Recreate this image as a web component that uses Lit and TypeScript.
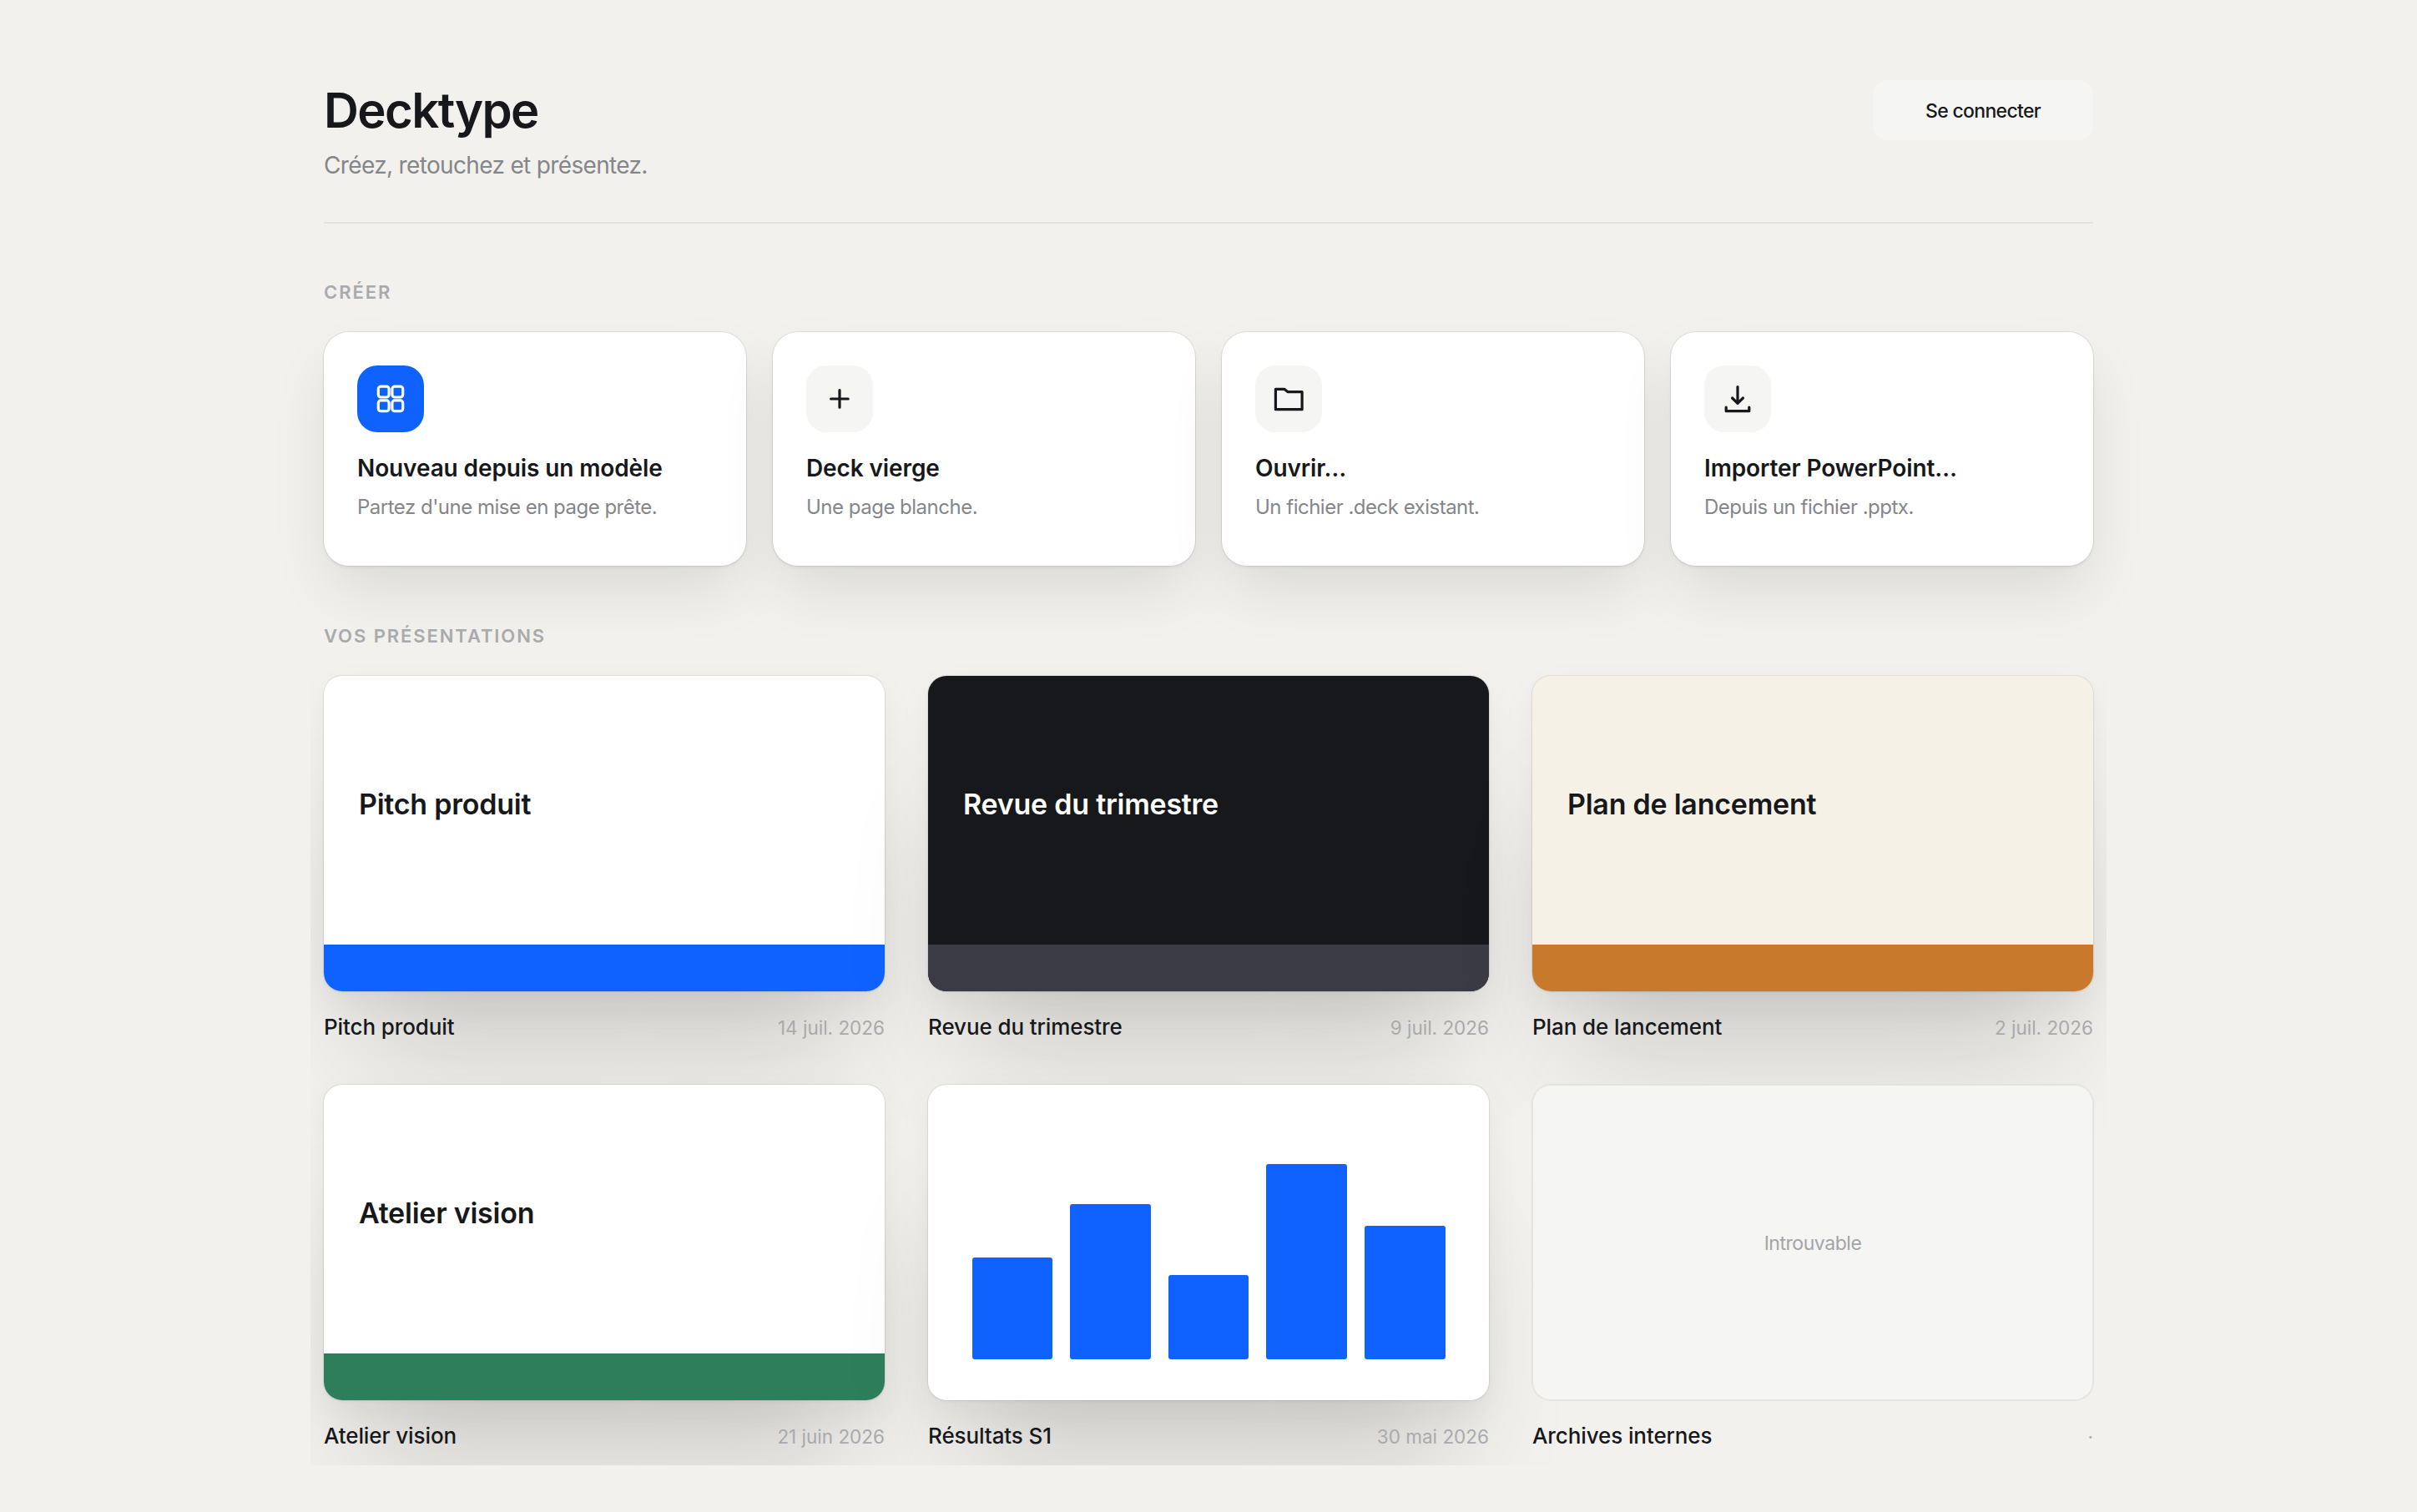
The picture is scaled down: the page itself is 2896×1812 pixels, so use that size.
import { LitElement, css, html, svg, nothing } from 'lit';
import { customElement } from 'lit/decorators.js';
import { classMap } from 'lit/directives/class-map.js';
import { styleMap } from 'lit/directives/style-map.js';

const icons = {
    grid: svg`
        <rect x="5.3" y="5.2" width="12.8" height="12.8" rx="3"/>
        <rect x="21.9" y="5.2" width="12.8" height="12.8" rx="3"/>
        <rect x="5.3" y="21.9" width="12.8" height="12.8" rx="3"/>
        <rect x="21.9" y="21.9" width="12.8" height="12.8" rx="3"/>`,
    plus: svg`<path d="M20 9.6v20.6M9.6 20h20.6"/>`,
    folder: svg`<path d="M4.4 8.3h10.4l4.3 3.4h17v21H4.4z"/>`,
    download: svg`<path d="M20 5.6v19.8M13.6 19l6.4 6.4 6.4-6.4M6.2 30v4.7h27.6V30"/>`,
}

interface Action {
    icon: keyof typeof icons;
    title: string;
    text: string;
    primary?: boolean;
}

interface Deck {
    title: string;
    date: string;
    theme: string;
    bars?: number[];
}

const actions: Action[] = [
    { icon: 'grid', title: 'Nouveau depuis un modèle', text: "Partez d'une mise en page prête.", primary: true },
    { icon: 'plus', title: 'Deck vierge', text: 'Une page blanche.' },
    { icon: 'folder', title: 'Ouvrir…', text: 'Un fichier .deck existant.' },
    { icon: 'download', title: 'Importer PowerPoint…', text: 'Depuis un fichier .pptx.' },
]

const decks: Deck[] = [
    { title: 'Pitch produit', date: '14 juil. 2026', theme: 'blue' },
    { title: 'Revue du trimestre', date: '9 juil. 2026', theme: 'dark' },
    { title: 'Plan de lancement', date: '2 juil. 2026', theme: 'sand' },
    { title: 'Atelier vision', date: '21 juin 2026', theme: 'green' },
    { title: 'Résultats S1', date: '30 mai 2026', theme: 'chart', bars: [122, 186, 101, 234, 160] },
    { title: 'Archives internes', date: '·', theme: 'missing' },
]

@customElement('action-card')
export class ActionCard extends LitElement {
    static override properties = {
        action: { attribute: false },
    }

    declare action: Action;

    static override styles = css`
        :host {
            display: block;
            box-sizing: border-box;
            height: 280px;
            padding: 40px;
            border-radius: 30px;
            background-color: #fff;
            box-shadow:
                0 0 0 1px rgba(0, 0, 0, 0.07),
                0 2px 4px rgba(0, 0, 0, 0.06),
                0 34px 72px -8px rgba(0, 0, 0, 0.1);
        }

        .icon {
            display: flex;
            align-items: center;
            justify-content: center;
            width: 80px;
            height: 80px;
            border-radius: 24px;
            background-color: #f5f5f3;
            color: #17181b;
        }

        .primary {
            background-color: #0f62fe;
            color: #fff;
        }

        svg {
            width: 40px;
            height: 40px;
            fill: none;
            stroke: currentColor;
            stroke-width: 3.2;
            stroke-linecap: round;
            stroke-linejoin: round;
        }

        .title {
            margin-top: 25px;
            font-size: 28px;
            line-height: 36px;
            font-weight: 600;
            letter-spacing: -0.004em;
            color: #17181b;
            white-space: nowrap;
        }

        .text {
            margin-top: 12px;
            font-size: 24px;
            line-height: 33px;
            letter-spacing: -0.021em;
            color: #85868a;
            white-space: nowrap;
        }
    `

    override render() {
        const { icon, title, text, primary } = this.action;
        return html`
        <div class=${classMap({ icon: true, primary: !!primary })}>
            <svg viewBox="0 0 40 40">${icons[icon]}</svg>
        </div>
        <div class="title">${title}</div>
        <div class="text">${text}</div>
        `
    }
}

@customElement('deck-tile')
export class DeckTile extends LitElement {
    static override properties = {
        deck: { attribute: false },
    }

    declare deck: Deck;

    static override styles = css`
        :host {
            display: block;
        }

        .thumb {
            display: flex;
            flex-direction: column;
            box-sizing: border-box;
            height: 378px;
            border-radius: 22px;
            overflow: hidden;
            background-color: #fff;
            color: #17181b;
            box-shadow:
                0 0 0 1px rgba(0, 0, 0, 0.06),
                0 1px 4px rgba(0, 0, 0, 0.05),
                0 16px 44px rgba(0, 0, 0, 0.05),
                0 120px 144px -44px rgba(0, 0, 0, 0.15);
        }

        .slide-title {
            flex: 1;
            display: flex;
            align-items: center;
            padding: 0 42px;
            padding-bottom: 14px;
            font-size: 34px;
            line-height: 40px;
            font-weight: 600;
            letter-spacing: -0.007em;
            white-space: nowrap;
        }

        .band {
            height: 56px;
            background-color: #0f62fe;
        }

        .dark {
            background-color: #17181b;
            color: #fff;
        }

        .dark .band {
            background-color: #3a3b45;
        }

        .sand {
            background-color: #f5f1e6;
        }

        .sand .band {
            background-color: #c8792b;
        }

        .green .band {
            background-color: #2e7d5b;
        }

        .chart {
            flex-direction: row;
            align-items: flex-end;
            gap: 21.2px;
            padding: 0 52.5px 49px;
        }

        .bar {
            flex: 1;
            border-radius: 3px;
            background-color: #0f62fe;
        }

        .missing {
            align-items: center;
            justify-content: center;
            padding-top: 2px;
            background-color: #f5f5f3;
            box-shadow:
                0 0 0 1px #e2e2df,
                inset 0 0 0 1px #e4e4e1;
            font-size: 23px;
            letter-spacing: -0.02em;
            color: #a3a4a7;
        }

        .meta {
            display: flex;
            align-items: baseline;
            justify-content: space-between;
            padding-top: 26.5px;
            line-height: 32px;
            white-space: nowrap;
        }

        .name {
            font-size: 26px;
            font-weight: 500;
            letter-spacing: -0.004em;
            color: #17181b;
        }

        .date {
            font-size: 22.5px;
            color: #a9aaad;
        }
    `

    renderSlide() {
        const { title, theme, bars } = this.deck;
        if (bars) {
            return bars.map(h => html`<div class="bar" style=${styleMap({ height: `${h}px` })}></div>`);
        }
        if (theme === 'missing') {
            return html`<span>Introuvable</span>`;
        }
        return html`
            <div class="slide-title">${title}</div>
            <div class="band"></div>
        `
    }

    override render() {
        if (!this.deck) return nothing;
        const { title, date, theme } = this.deck;
        return html`
        <div class=${classMap({ thumb: true, [theme]: true })}>${this.renderSlide()}</div>
        <div class="meta">
            <span class="name">${title}</span>
            <span class="date">${date}</span>
        </div>
        `
    }
}

@customElement('app-root')
export class AppRoot extends LitElement {
    static override styles = css`
        :host {
            display: block;
            box-sizing: border-box;
            height: 1812px;
            padding: 96px 388px 56px;
            overflow: hidden;
            background-color: #f2f1ed;
            font-family: Inter, 'Liberation Sans', sans-serif;
            color: #17181b;
        }

        header {
            display: flex;
            align-items: flex-start;
            justify-content: space-between;
            box-sizing: border-box;
            height: 172px;
            border-bottom: 2px solid #e2e1de;
        }

        h1 {
            margin: 0;
            font-size: 58px;
            line-height: 72px;
            font-weight: 600;
            letter-spacing: -0.027em;
        }

        .tagline {
            margin: 12px 0 0;
            font-size: 28px;
            line-height: 36px;
            letter-spacing: -0.0235em;
            color: #85868a;
        }

        button {
            width: 264px;
            height: 72px;
            padding: 2px 0 0;
            border: none;
            border-radius: 18px;
            background-color: #f5f5f3;
            font: 500 23px/32px Inter, 'Liberation Sans', sans-serif;
            letter-spacing: -0.03em;
            color: #17181b;
        }

        h2 {
            margin: 0;
            font-size: 22px;
            line-height: 28px;
            font-weight: 600;
            letter-spacing: 0.0875em;
            text-transform: uppercase;
            color: #a9aaad;
        }

        .create {
            margin-top: 68px;
        }

        .actions {
            display: grid;
            grid-template-columns: repeat(4, 1fr);
            gap: 32px;
            margin-top: 34px;
        }

        .library {
            margin-top: 70px;
        }

        /* the gutter keeps the tile shadows from being cut right at the edge */
        .decks {
            display: grid;
            grid-template-columns: repeat(3, 1fr);
            grid-auto-rows: 438px;
            align-content: start;
            gap: 52px;
            box-sizing: border-box;
            height: 962px;
            margin: 18px -16px 0;
            padding: 16px;
            overflow: hidden;
        }
    `

    override render() {
        return html`
        <header>
            <div>
                <h1>Decktype</h1>
                <p class="tagline">Créez, retouchez et présentez.</p>
            </div>
            <button>Se connecter</button>
        </header>
        <h2 class="create">Créer</h2>
        <div class="actions">
            ${actions.map(action => html`<action-card .action=${action}></action-card>`)}
        </div>
        <h2 class="library">Vos présentations</h2>
        <div class="decks">
            ${decks.map(deck => html`<deck-tile .deck=${deck}></deck-tile>`)}
        </div>
        `
    }
}
